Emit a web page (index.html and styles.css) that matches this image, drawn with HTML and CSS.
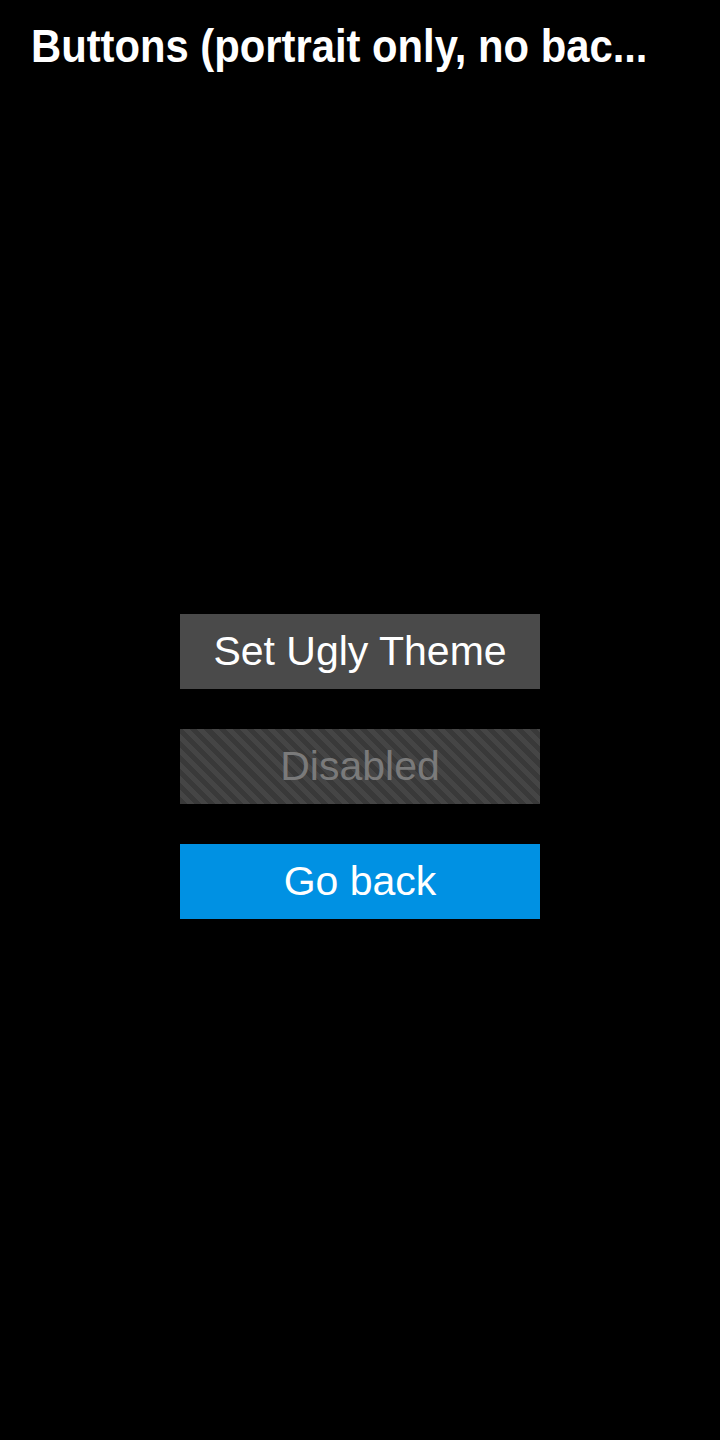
FILE: index.html
```html
<!DOCTYPE html>
<html lang="en">
<head>
  <meta charset="UTF-8" />
  <meta name="viewport" content="width=device-width, initial-scale=1.0"/>
  <title>Buttons</title>
  <link rel="stylesheet" href="styles.css">
</head>
<body>
  <header class="top-bar">
    <h1 class="title">Buttons (portrait only, no bac...</h1>
  </header>

  <main class="screen">
    <div class="button-list">
      <button class="btn btn-default">Set Ugly Theme</button>
      <button class="btn btn-disabled" disabled>Disabled</button>
      <button class="btn btn-primary">Go back</button>
    </div>
  </main>
</body>
</html>
```

FILE: styles.css
```css
html, body {
  margin: 0;
  padding: 0;
  height: 100%;
  background: #000;
}

body {
  font-family: "Liberation Sans", Arial, sans-serif;
  color: #fff;
  display: flex;
  flex-direction: column;
}

.top-bar {
  padding: 20px 31px 0;
  height: 74px;
  box-sizing: border-box;
}

.title {
  margin: 0;
  font-size: 46px;
  font-weight: bold;
  line-height: 52px;
  white-space: nowrap;
  transform: scaleX(0.908);
  transform-origin: left center;
}

.screen {
  flex: 1;
  display: flex;
  align-items: center;
  justify-content: center;
}

.button-list {
  display: flex;
  flex-direction: column;
  gap: 40px;
  width: 360px;
  margin-top: 19px;
}

.btn {
  height: 75px;
  border: none;
  border-radius: 0;
  padding: 0;
  font-family: inherit;
  font-size: 41px;
  color: #fff;
  cursor: pointer;
}

.btn-default {
  background: #4a4a4a;
}

.btn-disabled {
  color: #7a7a7a;
  cursor: default;
  background: repeating-linear-gradient(45deg, #393939 0, #393939 5px, #454545 5px, #454545 10px);
}

.btn-primary {
  background: #0091e3;
}
```
